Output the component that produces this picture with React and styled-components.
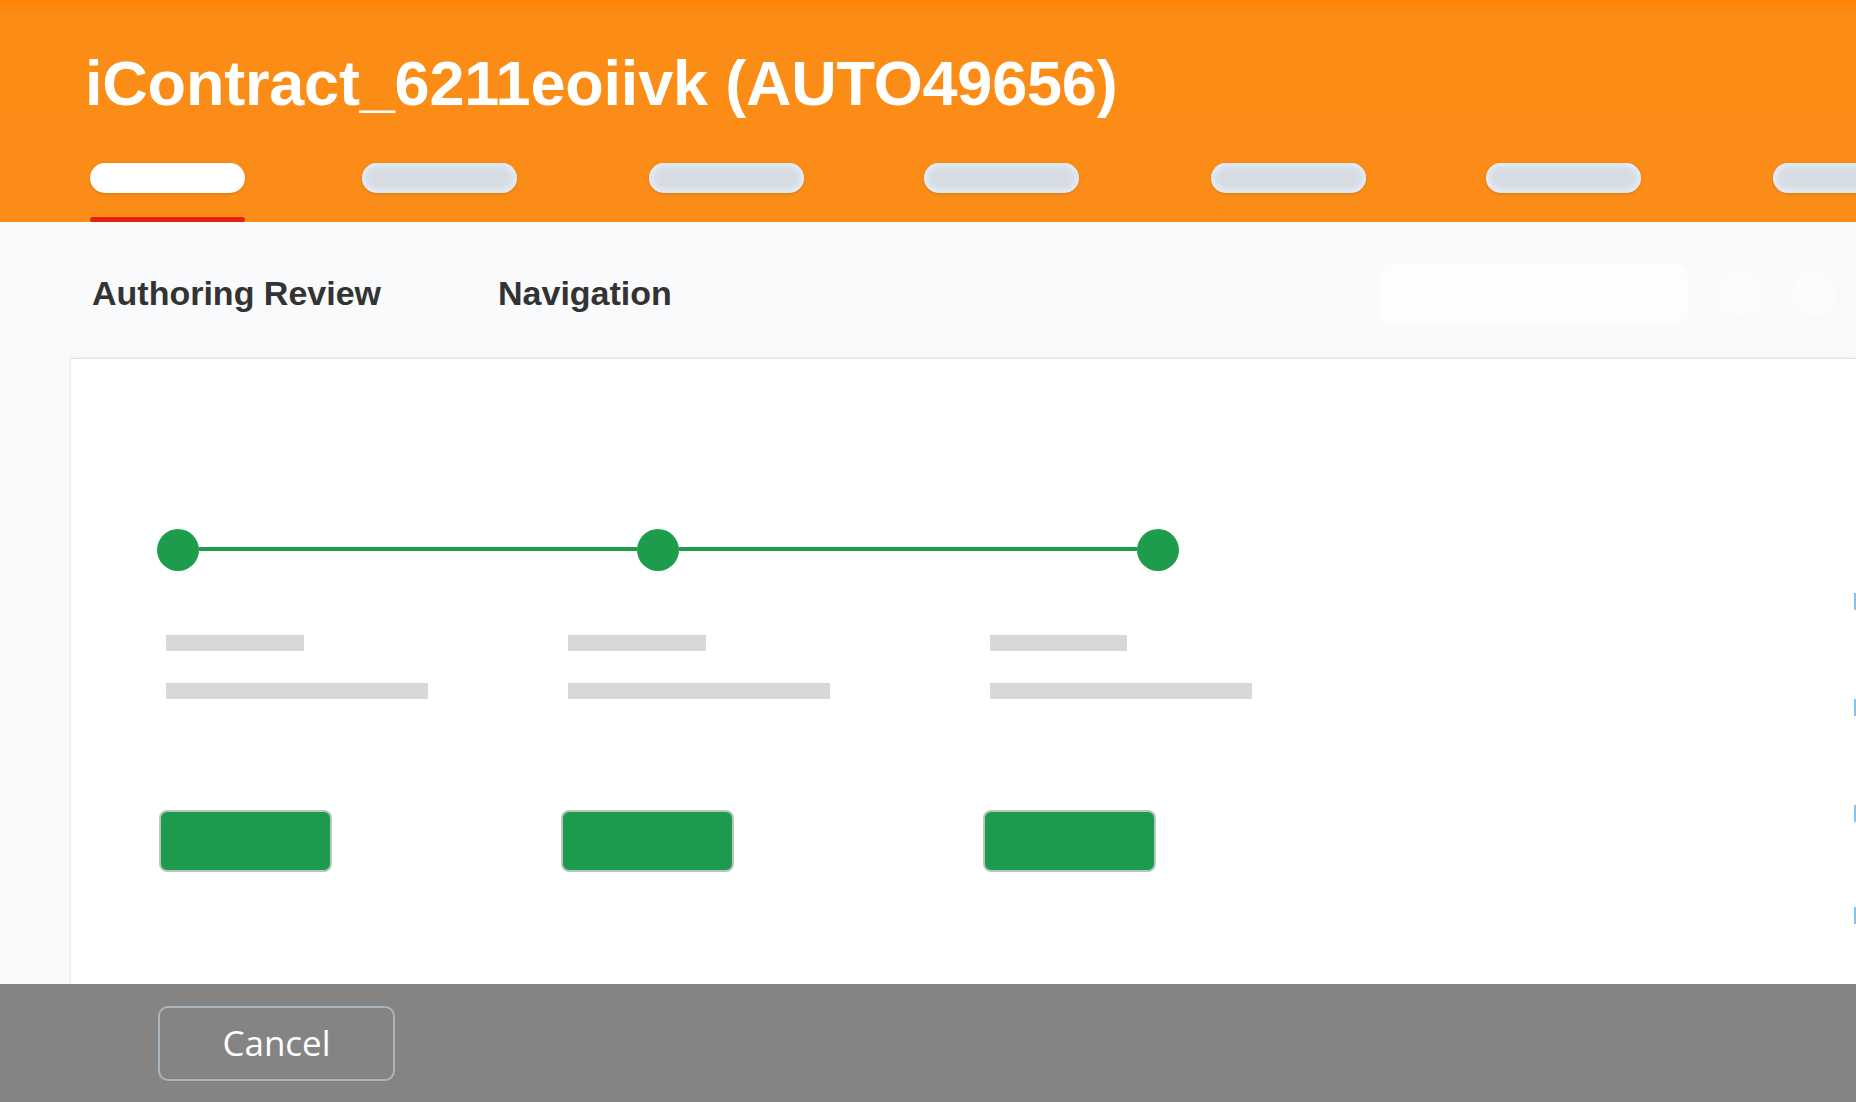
import React from "react";
import styled, { createGlobalStyle } from "styled-components";

const Global = createGlobalStyle`
  html, body { margin: 0; padding: 0; }
  body {
    width: 1856px;
    height: 1102px;
    overflow: hidden;
    font-family: "Liberation Sans", Arial, sans-serif;
    background: #f9fafb;
  }
  #root { height: 100%; }
`;

const Page = styled.div`
  display: flex;
  flex-direction: column;
  height: 1102px;
  width: 1856px;
  position: relative;
  overflow: hidden;
`;

const Header = styled.header`
  flex: 0 0 222px;
  box-sizing: border-box;
  padding: 52px 0 0 85px;
  background: linear-gradient(180deg, #fd8407 0px, #fb8c16 14px, #fb8d18 100%);
  overflow: hidden;
  display: flex;
  flex-direction: column;
`;

const Title = styled.h1`
  margin: 0;
  font-family: "Liberation Sans", Arial, sans-serif;
  font-weight: 700;
  font-size: 63px;
  line-height: 62px;
  color: #ffffff;
  letter-spacing: -0.2px;
  white-space: nowrap;
`;

const TabStrip = styled.nav`
  display: flex;
  margin-top: 49px;
  margin-left: 5px;
  flex-wrap: nowrap;
`;

const Tab = styled.div`
  flex: 0 0 155px;
  display: flex;
  flex-direction: column;
  align-items: stretch;
  &:nth-child(even) { margin-left: 120px; }
  &:nth-child(2) { margin-left: 117px; }
  &:nth-child(odd):not(:first-child) { margin-left: 132px; }
`;

const Pill = styled.div`
  height: 30px;
  border-radius: 15px;
  background: ${(p) => (p.$active ? "#ffffff" : "#d7dce3")};
  box-shadow: ${(p) =>
    p.$active
      ? "0 1px 3px rgba(190, 90, 0, 0.45)"
      : "inset 0 0 6px 3px #e6eef8, 0 1px 3px rgba(190, 90, 0, 0.45)"};
`;

const Underline = styled.div`
  margin-top: 24px;
  height: 5px;
  border-radius: 3px;
  background: ${(p) => (p.$active ? "#e5200c" : "transparent")};
`;

const SubHeader = styled.div`
  flex: 0 0 136px;
  box-sizing: border-box;
  padding: 54px 20px 0 92px;
  display: flex;
  gap: 117px;
  background: #f9fafb;
  position: relative;
`;

const SectionTab = styled.div`
  font-family: "Liberation Sans", Arial, sans-serif;
  font-weight: 700;
  font-size: 34px;
  line-height: 34px;
  color: #333333;
  white-space: nowrap;
`;

const GhostBar = styled.div`
  margin-left: auto;
  margin-top: -13px;
  display: flex;
  gap: 30px;
  align-items: center;
  height: 62px;
`;

const GhostPill = styled.div`
  width: 308px;
  height: 62px;
  border-radius: 14px;
  background: #fdfdfd;
`;

const GhostCircle = styled.div`
  width: 44px;
  height: 44px;
  border-radius: 50%;
  background: #fcfcfd;
`;

const Body = styled.main`
  flex: 1 1 auto;
  display: flex;
  padding-left: 70px;
  background: #f9fafb;
`;

const Card = styled.section`
  flex: 1 1 auto;
  position: relative;
  background: #ffffff;
  border-top: 1px solid #e3e4e6;
  border-left: 1px solid #eceef0;
  box-shadow: 0 -1px 3px rgba(0, 0, 0, 0.05);
  display: flex;
  flex-direction: column;
  padding-left: 86px;
`;

const Stepper = styled.div`
  margin-top: 170px;
  display: flex;
  align-items: center;
`;

const Dot = styled.div`
  flex: 0 0 42px;
  height: 42px;
  border-radius: 50%;
  background: #1d9c4c;
`;

const Line = styled.div`
  flex: 0 0 ${(p) => p.$w}px;
  height: 4px;
  margin-top: -2px;
  background: #1d9c4c;
`;

const Columns = styled.div`
  display: grid;
  grid-template-columns: 402px 422px 280px;
  margin-top: 64px;
  margin-left: 2px;
`;

const Column = styled.div`
  display: flex;
  flex-direction: column;
  align-items: flex-start;
`;

const Bar = styled.div`
  width: ${(p) => p.$w}px;
  height: 16px;
  margin-left: 7px;
  margin-top: ${(p) => p.$top || 0}px;
  background: #d8d8d8;
`;

const GoButton = styled.button`
  margin-top: 111px;
  width: 173px;
  height: 62px;
  box-sizing: border-box;
  border: 2px solid #b9c7be;
  border-radius: 8px;
  background: #1d9b4c;
  padding: 0;
  cursor: pointer;
`;

const EdgeMarks = styled.div`
  position: absolute;
  right: 0;
  top: 234px;
  display: flex;
  flex-direction: column;
`;

const EdgeMark = styled.div`
  width: 2px;
  height: 17px;
  margin-top: ${(p) => p.$gap}px;
  background: #86c3ea;
`;

const Footer = styled.footer`
  flex: 0 0 118px;
  box-sizing: border-box;
  background: #848484;
  padding: 22px 0 0 158px;
`;

const CancelButton = styled.button`
  width: 237px;
  height: 75px;
  box-sizing: border-box;
  border: 2px solid #a8b4be;
  border-radius: 10px;
  background: transparent;
  color: #ffffff;
  font-family: "Open Sans", "Noto Sans", sans-serif;
  font-size: 35px;
  font-weight: 400;
  padding: 0 0 2px;
  cursor: pointer;
`;

const tabs = [true, false, false, false, false, false, false];

const columns = [
  { short: 138, long: 262 },
  { short: 138, long: 262 },
  { short: 137, long: 262 },
];

const marks = [0, 89, 89, 85];

export default function App() {
  return (
    <Page>
      <Global />
      <Header>
        <Title>iContract_6211eoiivk (AUTO49656)</Title>
        <TabStrip>
          {tabs.map((active, i) => (
            <Tab key={i}>
              <Pill $active={active} />
              <Underline $active={active} />
            </Tab>
          ))}
        </TabStrip>
      </Header>
      <SubHeader>
        <SectionTab>Authoring Review</SectionTab>
        <SectionTab>Navigation</SectionTab>
        <GhostBar>
          <GhostPill />
          <GhostCircle />
          <GhostCircle />
        </GhostBar>
      </SubHeader>
      <Body>
        <Card>
          <Stepper>
            <Dot />
            <Line $w={438} />
            <Dot />
            <Line $w={458} />
            <Dot />
          </Stepper>
          <Columns>
            {columns.map((c, i) => (
              <Column key={i}>
                <Bar $w={c.short} />
                <Bar $w={c.long} $top={32} />
                <GoButton aria-label="step action" />
              </Column>
            ))}
          </Columns>
          <EdgeMarks>
            {marks.map((g, i) => (
              <EdgeMark key={i} $gap={g} />
            ))}
          </EdgeMarks>
        </Card>
      </Body>
      <Footer>
        <CancelButton>Cancel</CancelButton>
      </Footer>
    </Page>
  );
}
